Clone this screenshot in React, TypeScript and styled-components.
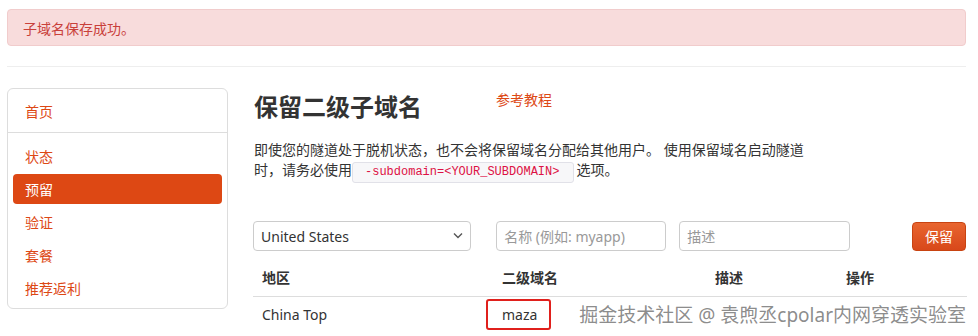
import React from 'react';
import styled, { createGlobalStyle } from 'styled-components';

const GlobalStyle = createGlobalStyle`
    body {
        margin: 0;
        background: #fff;
        font-family: "Noto Sans", "Noto Sans CJK SC", sans-serif;
        font-size: 14px;
        color: #333;
    }
`;

const ORANGE = '#dd4814';

const Page = styled.div`
    position: relative;
    width: 978px;
    height: 336px;
    overflow: hidden;
    padding: 9px 12px 0 7px;
    box-sizing: border-box;
`;

const Alert = styled.div`
    height: 37px;
    box-sizing: border-box;
    padding: 0 15px;
    display: flex;
    align-items: center;
    background: #f8dcdc;
    border: 1px solid #f1cccc;
    border-radius: 4px;
    color: #c9403a;
    font-size: 14px;
`;

const Rule = styled.hr`
    margin: 20px 0 21px;
    border: none;
    border-top: 1px solid #eee;
`;

const Layout = styled.div`
    display: flex;
    gap: 25px;
    align-items: flex-start;
`;

const Sidebar = styled.nav`
    width: 221px;
    box-sizing: border-box;
    border: 1px solid #ddd;
    border-radius: 6px;
    padding-bottom: 5px;
`;

const HomeItem = styled.div`
    height: 43px;
    display: flex;
    align-items: center;
    padding-left: 17px;
    color: ${ORANGE};
    border-bottom: 1px solid #ddd;
`;

const NavList = styled.div`
    display: flex;
    flex-direction: column;
    gap: 3px;
    padding: 8px 5px 0;
`;

const NavItem = styled.div<{ $active?: boolean }>`
    height: 30px;
    display: flex;
    align-items: center;
    padding-left: 12px;
    border-radius: 4px;
    color: ${(p) => (p.$active ? '#fff' : ORANGE)};
    background: ${(p) => (p.$active ? ORANGE : 'transparent')};
`;

const Main = styled.main`
    flex: 1;
    min-width: 0;
`;

const TitleRow = styled.div`
    display: flex;
    align-items: flex-start;
`;

const Title = styled.h1`
    margin: 4px 0 0 1px;
    font-size: 24px;
    line-height: 30px;
    font-weight: 700;
    color: #333;
`;

const TutorialLink = styled.a`
    margin: 2px 0 0 74px;
    line-height: 20px;
    color: ${ORANGE};
    text-decoration: none;
`;

const Intro = styled.p`
    width: 558px;
    margin: 18px 0 0 1px;
    line-height: 20px;
    color: #333;
`;

const Code = styled.code`
    display: inline-block;
    margin-right: 2px;
    padding: 0 14px 0 12px;
    line-height: 19px;
    font-family: "Liberation Mono", "DejaVu Sans Mono", monospace;
    font-size: 12px;
    color: #dd1144;
    background: #f7f7f9;
    border: 1px solid #e1e1e8;
    border-radius: 3px;
`;

const Form = styled.div`
    display: flex;
    align-items: center;
    margin-top: 38px;
`;

const SelectWrap = styled.div`
    position: relative;
    width: 219px;
    height: 30px;
`;

const Select = styled.select`
    appearance: none;
    width: 100%;
    height: 100%;
    box-sizing: border-box;
    padding: 0 7px;
    border: 1px solid #ccc;
    border-radius: 4px;
    background: #fff;
    font-family: inherit;
    font-size: 14px;
    color: #333;
`;

const Chevron = styled.svg`
    position: absolute;
    right: 8px;
    top: 11px;
    pointer-events: none;
`;

const Input = styled.input<{ $w: number; $ml: number }>`
    width: ${(p) => p.$w}px;
    height: 30px;
    margin-left: ${(p) => p.$ml}px;
    box-sizing: border-box;
    padding: 0 7px;
    border: 1px solid #ccc;
    border-radius: 4px;
    font-family: inherit;
    font-size: 14px;
    color: #333;

    &::placeholder {
        color: #999;
    }
`;

const SaveButton = styled.button`
    margin-left: 62px;
    width: 54px;
    height: 29px;
    border: 1px solid #c84311;
    border-radius: 4px;
    background: linear-gradient(#e8652f, #d8481a);
    color: #fff;
    font-family: inherit;
    font-size: 14px;
    cursor: pointer;
`;

const Table = styled.div`
    margin-top: 9px;
    width: 714px;
`;

const Row = styled.div<{ $head?: boolean }>`
    display: grid;
    grid-template-columns: 240px 213px 131px 130px;
    border-top: ${(p) => (p.$head ? 'none' : '1px solid #ddd')};
    font-weight: ${(p) => (p.$head ? 700 : 400)};
`;

const Cell = styled.div`
    padding: 8px 8px 8px 9px;
    line-height: 20px;
`;

const Marked = styled.span`
    position: relative;

    &::after {
        content: '';
        position: absolute;
        inset: -6px -14px -6px -16px;
        border: 2px solid #e0201c;
        border-radius: 3px;
    }
`;

const Watermark = styled.div`
    position: absolute;
    right: 12px;
    bottom: 8px;
    font-size: 19px;
    color: rgba(110, 110, 110, 0.8);
    white-space: nowrap;
`;

const navItems = ['状态', '预留', '验证', '套餐', '推荐返利'];

const App = () => {
    return (
        <Page>
            <GlobalStyle />
            <Alert>子域名保存成功。</Alert>
            <Rule />
            <Layout>
                <Sidebar>
                    <HomeItem>首页</HomeItem>
                    <NavList>
                        {navItems.map((item) => (
                            <NavItem key={item} $active={item === '预留'}>
                                {item}
                            </NavItem>
                        ))}
                    </NavList>
                </Sidebar>
                <Main>
                    <TitleRow>
                        <Title>保留二级子域名</Title>
                        <TutorialLink href="#">参考教程</TutorialLink>
                    </TitleRow>
                    <Intro>
                        即使您的隧道处于脱机状态，也不会将保留域名分配给其他用户。 使用保留域名启动隧道时，请务必使用
                        <Code>-subdomain=&lt;YOUR_SUBDOMAIN&gt;</Code>选项。
                    </Intro>
                    <Form>
                        <SelectWrap>
                            <Select defaultValue="us">
                                <option value="us">United States</option>
                                <option value="cn">China Top</option>
                            </Select>
                            <Chevron width="10" height="7" viewBox="0 0 10 7">
                                <path d="M1 1.5 L5 5.5 L9 1.5" fill="none" stroke="#555" strokeWidth="1.4" />
                            </Chevron>
                        </SelectWrap>
                        <Input $w={170} $ml={25} placeholder="名称 (例如: myapp)" />
                        <Input $w={171} $ml={13} placeholder="描述" />
                        <SaveButton>保留</SaveButton>
                    </Form>
                    <Table>
                        <Row $head>
                            <Cell>地区</Cell>
                            <Cell>二级域名</Cell>
                            <Cell>描述</Cell>
                            <Cell>操作</Cell>
                        </Row>
                        <Row>
                            <Cell>China Top</Cell>
                            <Cell>
                                <Marked>maza</Marked>
                            </Cell>
                            <Cell />
                            <Cell />
                        </Row>
                    </Table>
                </Main>
            </Layout>
            <Watermark>掘金技术社区 @ 袁煦丞cpolar内网穿透实验室</Watermark>
        </Page>
    );
};

export default App;
